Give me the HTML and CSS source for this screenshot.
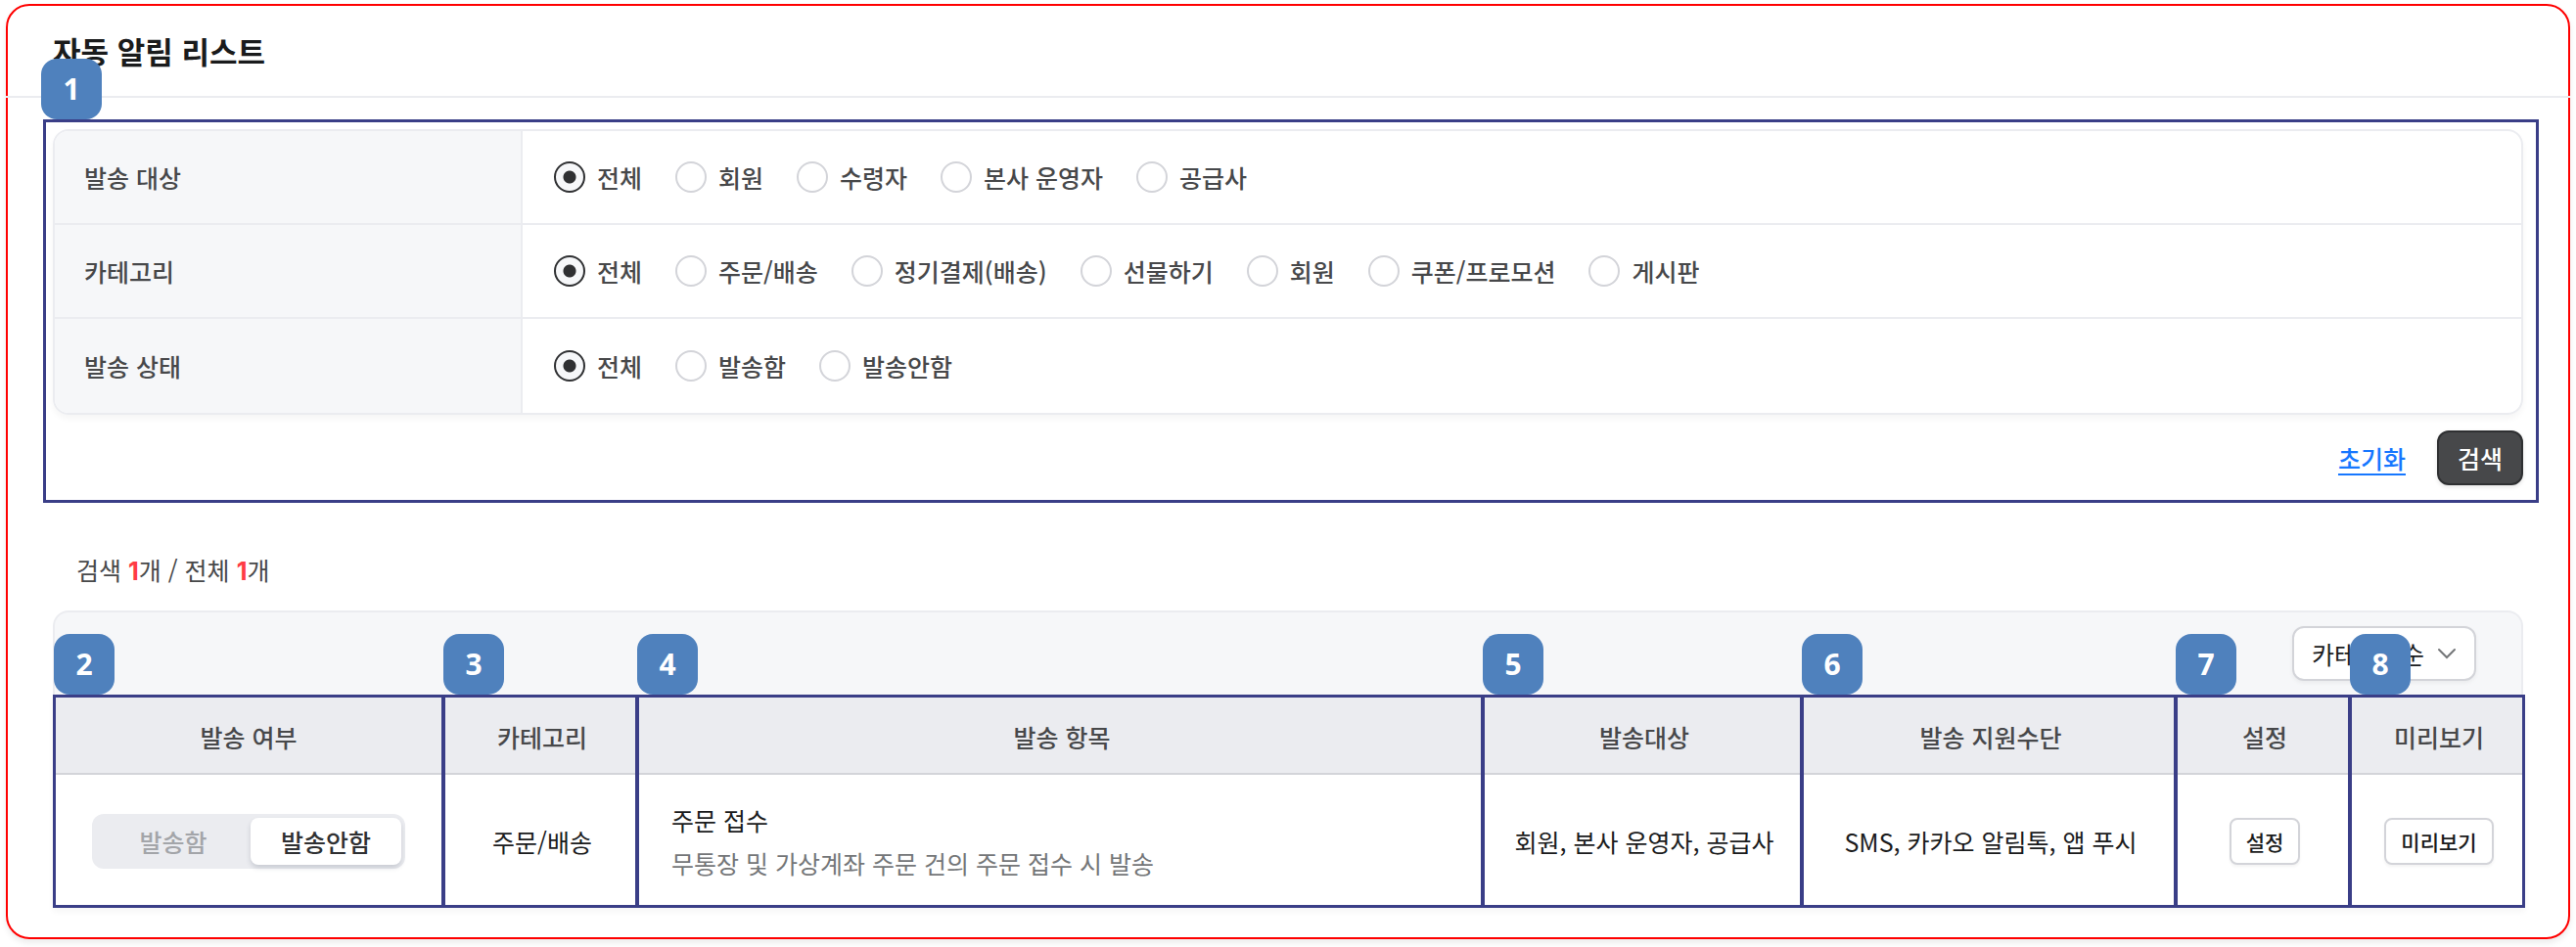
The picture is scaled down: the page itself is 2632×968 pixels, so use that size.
FILE: index.html
```
<!DOCTYPE html>
<html lang="ko">

<head>
  <meta charset="UTF-8">
  <meta name="viewport" content="width=device-width, initial-scale=1.0">
  <title>자동 알림 리스트</title>

  <link rel="stylesheet" href="styles.css">
</head>

<body>
  <main class="card">
    <header class="card-header">
      <h1>자동 알림 리스트</h1>
    </header>

    <!-- 검색 조건 -->
    <form class="search-box">
      <span class="badge">1</span>
      <table class="filter">
        <tr>
          <th scope="row">발송 대상</th>
          <td>
            <div class="radios">
              <label><input type="radio" name="target" checked>전체</label>
              <label><input type="radio" name="target">회원</label>
              <label><input type="radio" name="target">수령자</label>
              <label><input type="radio" name="target">본사 운영자</label>
              <label><input type="radio" name="target">공급사</label>
            </div>
          </td>
        </tr>
        <tr>
          <th scope="row">카테고리</th>
          <td>
            <div class="radios">
              <label><input type="radio" name="category" checked>전체</label>
              <label><input type="radio" name="category">주문/배송</label>
              <label><input type="radio" name="category">정기결제(배송)</label>
              <label><input type="radio" name="category">선물하기</label>
              <label><input type="radio" name="category">회원</label>
              <label><input type="radio" name="category">쿠폰/프로모션</label>
              <label><input type="radio" name="category">게시판</label>
            </div>
          </td>
        </tr>
        <tr>
          <th scope="row">발송 상태</th>
          <td>
            <div class="radios">
              <label><input type="radio" name="status" checked>전체</label>
              <label><input type="radio" name="status">발송함</label>
              <label><input type="radio" name="status">발송안함</label>
            </div>
          </td>
        </tr>
      </table>
      <div class="search-actions">
        <a class="reset" href="#">초기화</a>
        <button class="btn-search" type="button">검색</button>
      </div>
    </form>

    <!-- 검색 결과 -->
    <section class="result">
      <p class="count">검색 <b>1</b>개 / 전체 <b>1</b>개</p>
      <div class="toolbar">
        <div class="sort">
          <select aria-label="정렬">
            <option>카테고리순</option>
          </select>
          <svg class="chevron" viewBox="0 0 20 12" aria-hidden="true">
            <path d="M2 2l8 8 8-8" />
          </svg>
        </div>
      </div>
      <table class="list">
        <colgroup>
          <col class="col-use">
          <col class="col-category">
          <col>
          <col class="col-target">
          <col class="col-method">
          <col class="col-btn">
          <col class="col-btn">
        </colgroup>
        <thead>
          <tr>
            <th><span class="badge">2</span>발송 여부</th>
            <th><span class="badge">3</span>카테고리</th>
            <th><span class="badge">4</span>발송 항목</th>
            <th><span class="badge">5</span>발송대상</th>
            <th><span class="badge">6</span>발송 지원수단</th>
            <th><span class="badge">7</span>설정</th>
            <th><span class="badge">8</span>미리보기</th>
          </tr>
        </thead>
        <tbody>
          <tr>
            <td>
              <div class="toggle">
                <button type="button">발송함</button>
                <button class="on" type="button">발송안함</button>
              </div>
            </td>
            <td>주문/배송</td>
            <td class="item">
              <p>주문 접수</p>
              <p class="desc">무통장 및 가상계좌 주문 건의 주문 접수 시 발송</p>
            </td>
            <td>회원, 본사 운영자, 공급사</td>
            <td>SMS, 카카오 알림톡, 앱 푸시</td>
            <td><button class="btn-small" type="button">설정</button></td>
            <td><button class="btn-small" type="button">미리보기</button></td>
          </tr>
        </tbody>
      </table>
    </section>
  </main>
</body>

</html>
```
FILE: styles.css
```
* {
  margin: 0;
  padding: 0;
  box-sizing: border-box;
}

body {
  padding: 4px 6px 8px;
  background-color: #fff;
  color: #47484a;
  font-family: "Noto Sans CJK KR", sans-serif;
  font-size: 25px;
  line-height: 44px;
}

button,
select {
  font: inherit;
  cursor: pointer;
}

table {
  width: 100%;
  border-spacing: 0;
}

.card {
  padding-bottom: 30px;
  border: 2px solid #f00;
  border-radius: 24px;
  box-shadow: 0 4px 6px rgba(0, 0, 0, 0.08);
}

.card-header {
  height: 94px;
  margin: 0 -2px 22px;
  padding: 0 48px;
  display: flex;
  align-items: center;
  border-bottom: 2px solid #ebecf0;
}

h1 {
  font-size: 31px;
  font-weight: 700;
  color: #1a1b1c;
}

.badge {
  width: 62px;
  height: 62px;
  position: absolute;
  left: -2px;
  bottom: calc(100% + 3px);
  border-radius: 16px;
  background-color: #4f81bd;
  color: #fff;
  font-family: "Noto Sans", sans-serif;
  font-size: 30px;
  font-weight: 700;
  line-height: 62px;
  text-align: center;
  z-index: 1;
}

.search-box {
  position: relative;
  margin: 0 30px 0 36px;
  padding: 7px 13px 15px 7px;
  border: 3px solid #3a3e87;
}

.search-box > .badge {
  left: -5px;
}

.filter {
  border: 2px solid #ebecf0;
  border-radius: 16px;
  overflow: hidden;
  box-shadow: 0 4px 6px rgba(0, 0, 0, 0.04);
}

.filter th,
.filter td {
  height: 96px;
  border-bottom: 2px solid #ebecf0;
}

.filter tr:last-child th,
.filter tr:last-child td {
  border-bottom: 0;
}

.filter th {
  width: 478px;
  padding-left: 30px;
  background-color: #f6f7f9;
  border-right: 2px solid #ebecf0;
  font-weight: 500;
  text-align: left;
}

.filter td {
  padding-left: 32px;
}

.radios {
  display: flex;
  gap: 34px;
}

.radios label {
  display: flex;
  align-items: center;
  gap: 12px;
  font-weight: 500;
  cursor: pointer;
}

.radios input {
  appearance: none;
  width: 32px;
  height: 32px;
  border: 2px solid #d3d4d9;
  border-radius: 50%;
  background-color: #fff;
}

.radios input:checked {
  border-color: #2f3032;
  background: radial-gradient(circle, #2f3032 6px, #f6f7f9 7px);
}

.search-actions {
  margin-top: 16px;
  display: flex;
  justify-content: flex-end;
  align-items: center;
  gap: 32px;
}

.reset {
  color: #1677ff;
  font-weight: 500;
  text-underline-offset: 5px;
  text-decoration-thickness: 2px;
}

.btn-search {
  width: 88px;
  height: 56px;
  border: 2px solid #2f3032;
  border-radius: 12px;
  background-color: #47484a;
  color: #fff;
  font-weight: 500;
  box-shadow: 0 2px 4px rgba(0, 0, 0, 0.1);
}

.result {
  margin: 0 44px 0 46px;
}

.count {
  height: 110px;
  padding: 46px 0 0 24px;
}

.count b {
  color: #ff3b44;
  font-family: Inter, sans-serif;
}

.toolbar {
  margin-right: 2px;
  padding: 14px 46px 14px 0;
  display: flex;
  justify-content: flex-end;
  border: 2px solid #ebecf0;
  border-bottom: 0;
  border-radius: 16px 16px 0 0;
  background-color: #f6f7f9;
}

.sort {
  position: relative;
}

.sort select {
  appearance: none;
  display: block;
  width: 188px;
  height: 56px;
  padding-left: 18px;
  border: 2px solid #d3d4d9;
  border-radius: 12px;
  background-color: #fff;
  color: #1a1b1c;
  box-shadow: 0 2px 4px rgba(0, 0, 0, 0.05);
}

.chevron {
  width: 20px;
  height: 12px;
  position: absolute;
  top: 22px;
  right: 20px;
  fill: none;
  stroke: #747678;
  stroke-width: 2;
  stroke-linecap: round;
  pointer-events: none;
}

.list {
  table-layout: fixed;
  border: 3px solid #3a3e87;
  color: #1a1b1c;
  text-align: center;
  box-shadow: 0 4px 6px rgba(0, 0, 0, 0.04);
}

.col-use {
  width: 394px;
}

.col-category {
  width: 198px;
}

.col-target {
  width: 326px;
}

.col-method {
  width: 382px;
}

.col-btn {
  width: 178px;
}

.list th + th,
.list td + td {
  padding-left: 4px;
  border-left: 4px solid #3a3e87;
}

.list th {
  height: 79px;
  position: relative;
  background-color: #ebecf0;
  box-shadow: inset 0 -2px #d3d4d9;
  color: #47484a;
  font-weight: 500;
}

.list td {
  height: 133px;
  padding-top: 3px;
}

.list .item {
  padding-left: 33px;
  text-align: left;
}

.desc {
  color: #747678;
}

.toggle {
  width: 320px;
  height: 56px;
  margin: 0 auto;
  padding: 4px;
  display: flex;
  border-radius: 12px;
  background-color: #ebecf0;
}

.toggle button {
  flex: 1;
  border: 0;
  border-radius: 8px;
  background: none;
  color: #a3a5a9;
  font-weight: 500;
}

.toggle .on {
  flex: 0 0 154px;
  background-color: #fff;
  color: #2f3032;
  box-shadow: 0 3px 5px rgba(60, 70, 90, 0.2);
}

.btn-small {
  height: 48px;
  padding: 0 15px;
  border: 2px solid #d3d4d9;
  border-radius: 8px;
  background-color: #fff;
  color: #1a1b1c;
  font-size: 21px;
  font-weight: 500;
  box-shadow: 0 2px 3px rgba(0, 0, 0, 0.05);
}
```
